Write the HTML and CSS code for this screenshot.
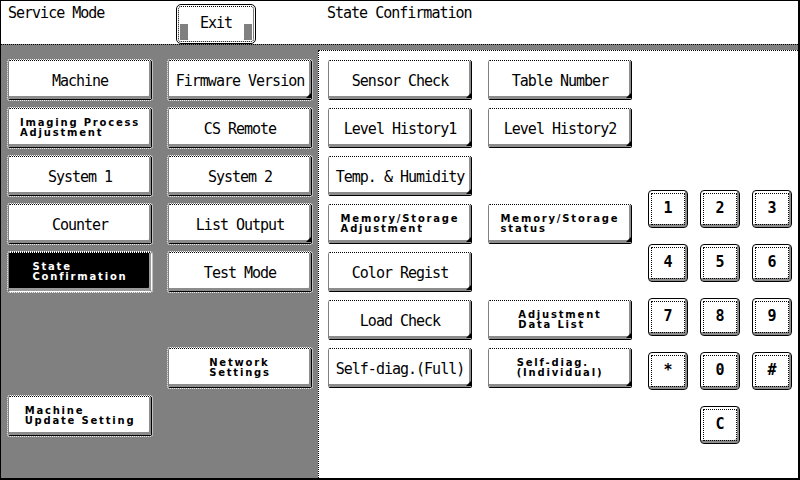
FILE: index.html
```html
<!DOCTYPE html>
<html lang="en">
<head>
    <meta charset="UTF-8">
    <meta name="viewport" content="width=device-width, initial-scale=1.0">
    <title>Service Mode - State Confirmation</title>
    <link rel="stylesheet" href="styles.css">
</head>
<body>
    <div class="screen">
        <header class="topbar">
            <div class="title">Service Mode</div>
            <button class="exit"><span class="exit-face">Exit</span></button>
            <div class="title page-title">State Confirmation</div>
        </header>

        <main class="body">
            <nav class="menu">
                <button class="key">Machine</button>
                <button class="key more">Firmware Version</button>
                <button class="key small"><span class="label">Imaging Process<br>Adjustment</span></button>
                <button class="key">CS Remote</button>
                <button class="key">System 1</button>
                <button class="key">System 2</button>
                <button class="key">Counter</button>
                <button class="key more">List Output</button>
                <button class="key small active"><span class="label">State<br>Confirmation</span></button>
                <button class="key">Test Mode</button>
                <div class="slot"></div>
                <div class="slot"></div>
                <div class="slot"></div>
                <button class="key small"><span class="label">Network<br>Settings</span></button>
                <button class="key small"><span class="label">Machine<br>Update Setting</span></button>
            </nav>

            <section class="panel">
                <div class="items">
                    <button class="key more">Sensor Check</button>
                    <button class="key more">Table Number</button>
                    <button class="key more">Level History1</button>
                    <button class="key more">Level History2</button>
                    <button class="key more">Temp. &amp; Humidity</button>
                    <div class="slot"></div>
                    <button class="key small more"><span class="label">Memory/Storage<br>Adjustment</span></button>
                    <button class="key small more"><span class="label">Memory/Storage<br>status</span></button>
                    <button class="key more">Color Regist</button>
                    <div class="slot"></div>
                    <button class="key more">Load Check</button>
                    <button class="key small more"><span class="label">Adjustment<br>Data List</span></button>
                    <button class="key more">Self-diag.(Full)</button>
                    <button class="key small more"><span class="label">Self-diag.<br>(Individual)</span></button>
                </div>

                <div class="keypad">
                    <button class="pad-key">1</button>
                    <button class="pad-key">2</button>
                    <button class="pad-key">3</button>
                    <button class="pad-key">4</button>
                    <button class="pad-key">5</button>
                    <button class="pad-key">6</button>
                    <button class="pad-key">7</button>
                    <button class="pad-key">8</button>
                    <button class="pad-key">9</button>
                    <button class="pad-key">*</button>
                    <button class="pad-key">0</button>
                    <button class="pad-key">#</button>
                    <button class="pad-key clear">C</button>
                </div>
            </section>
        </main>
    </div>
</body>
</html>
```

FILE: styles.css
```css
body {
    margin: 0;
    background: #fff;
}
.screen {
    box-sizing: border-box;
    width: 800px;
    height: 480px;
    border: 1px solid #000;
    border-right-width: 2px;
    border-bottom-width: 2px;
    display: flex;
    flex-direction: column;
    font-family: "DejaVu Sans Mono", monospace;
    color: #000;
}

/* header row */
.topbar {
    height: 43px;
    display: grid;
    grid-template-columns: 175px 80px 1fr;
    align-items: start;
}
.title {
    font-size: 15px;
    letter-spacing: -1px;
    padding: 3px 0 0 7px;
}
.page-title {
    padding-left: 71px;
}
.exit {
    box-sizing: border-box;
    width: 80px;
    height: 40px;
    margin-top: 3px;
    padding: 3px 3px 2px;
    border: 1px solid #000;
    border-radius: 5px;
    outline: 1px dotted #000;
    outline-offset: -3px;
    background:
        linear-gradient(#808080, #808080) left 3px bottom 3px / 9px 16px no-repeat,
        linear-gradient(#808080, #808080) right 3px bottom 3px / 9px 16px no-repeat,
        #fff;
    font: inherit;
    cursor: pointer;
}
.exit-face {
    display: flex;
    align-items: center;
    justify-content: center;
    height: 100%;
    margin: 0 8px;
    background: #fff;
    border-radius: 9px 9px 2px 2px;
    font-size: 15px;
    letter-spacing: -1px;
    padding-bottom: 3px;
    box-sizing: border-box;
}

/* main area */
.body {
    flex: 1;
    display: flex;
    background: #808080;
    border-top: 1px dotted #000;
    min-height: 0;
}
.menu {
    width: 317px;
    box-sizing: border-box;
    padding: 15px 0 0 7px;
    display: grid;
    grid-template-columns: 144px 144px;
    grid-auto-rows: 40px;
    column-gap: 16px;
    row-gap: 8px;
    align-content: start;
}
.panel {
    flex: 1;
    margin-top: 5px;
    background: #fff;
    border-top: 1px dotted #000;
    border-left: 1px dotted #000;
    padding: 9px 0 0 9px;
    display: flex;
    gap: 16px;
    align-items: start;
}
.items {
    display: grid;
    grid-template-columns: 144px 144px;
    grid-auto-rows: 40px;
    column-gap: 16px;
    row-gap: 8px;
}

/* buttons */
.key {
    box-sizing: border-box;
    position: relative;
    display: flex;
    align-items: center;
    justify-content: center;
    padding: 1px 0 0;
    background: #fff;
    border: 1px solid #000;
    border-top-style: dotted;
    border-left-style: dotted;
    border-radius: 2px;
    box-shadow: inset -2px -3px 0 #8c8c8c;
    font-family: "DejaVu Sans Mono", monospace;
    font-size: 15px;
    letter-spacing: -1px;
    color: #000;
    white-space: nowrap;
    cursor: pointer;
}
.menu .key {
    outline: 1px dotted #fff;
}
.key.more::after {
    content: "";
    position: absolute;
    right: 0;
    bottom: 1px;
    border-left: 5px solid transparent;
    border-bottom: 5px solid #000;
}
.key.small {
    padding: 0 0 1px;
}
.key.small .label {
    font-family: "DejaVu Sans", sans-serif;
    font-size: 10px;
    font-weight: bold;
    line-height: 10px;
    letter-spacing: 1.8px;
    text-align: left;
}
.key.active {
    background: #000;
    color: #fff;
    border-color: #fff;
    box-shadow: inset -2px -3px 0 #9a9a9a;
}

/* numeric keypad */
.keypad {
    margin-top: 130px;
    display: grid;
    grid-template-columns: repeat(3, 40px);
    grid-auto-rows: 38px;
    column-gap: 12px;
    row-gap: 16px;
}
.pad-key {
    box-sizing: border-box;
    padding: 0 0 2px;
    background: #fff;
    border: 1px solid #000;
    border-radius: 4px;
    box-shadow: inset -2px -3px 0 #8c8c8c;
    outline: 1px dotted #000;
    outline-offset: -4px;
    font-family: "DejaVu Sans Mono", monospace;
    font-size: 15px;
    font-weight: bold;
    color: #000;
    cursor: pointer;
}
.pad-key.clear {
    grid-column: 2;
}
```
